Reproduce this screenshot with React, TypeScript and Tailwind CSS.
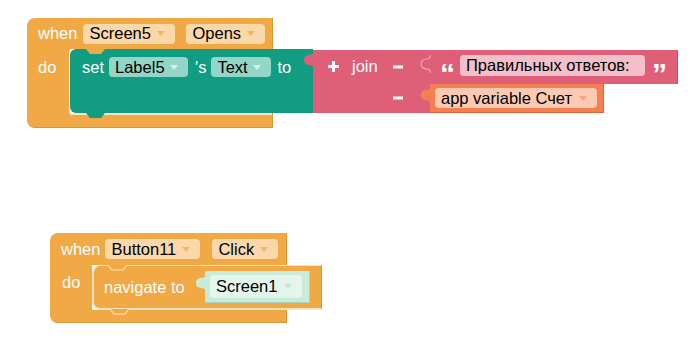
import React from "react";

type PillProps = {
  label: string;
  className: string;
  arrow: string;
};

const Arrow = ({ color }: { color: string }) => (
  <svg width="8" height="5" viewBox="0 0 8 5" className="shrink-0">
    <path d="M0 0H8L4 5Z" fill={color} />
  </svg>
);

const Pill = ({ label, className, arrow }: PillProps) => (
  <div
    className={`flex items-center justify-between rounded-[4px] pl-[6px] pr-[10px] text-black whitespace-nowrap ${className}`}
  >
    <span>{label}</span>
    <Arrow color={arrow} />
  </div>
);

// trapezoid notch used on statement blocks
const Notch = ({ fill, stroke, className }: { fill: string; stroke?: string; className: string }) => (
  <svg width="20" height="6" viewBox="0 0 20 6" className={`absolute ${className}`}>
    <path d="M0 0 L4 5 H15 L19 0" fill={fill} stroke={stroke ?? "none"} strokeWidth="1.2" />
  </svg>
);

// puzzle tab on the left of a value block
const Tab = ({ fill, stroke, className }: { fill: string; stroke?: string; className: string }) => (
  <svg width="11" height="18" viewBox="0 0 11 18" className={`absolute ${className}`}>
    <path
      d="M11 0.5 C10 0.5 10 3 9 3.5 C3 4 1 5.5 1 9 C1 12.5 3 14 9 14.5 C10 15 10 17.5 11 17.5"
      fill={fill}
      stroke={stroke ?? "none"}
      strokeWidth="1.2"
    />
  </svg>
);

const Minus = () => (
  <svg width="10" height="4" viewBox="0 0 10 4">
    <rect x="0" y="0.5" width="10" height="3" fill="#fff" />
  </svg>
);

const Plus = () => (
  <svg width="11" height="11" viewBox="0 0 11 11">
    <rect x="0" y="4" width="11" height="3" fill="#fff" />
    <rect x="4" y="0" width="3" height="11" fill="#fff" />
  </svg>
);

const OpensEvent = () => (
  <div className="absolute left-[27px] top-[18px] flex flex-col">
    <div className="flex items-center w-[246px] h-[31px] bg-[#f1a946] rounded-tl-[8px] border-r border-[#dc9536] pl-[11px] text-white">
      <span>when</span>
      <Pill label="Screen5" className="ml-[6px] w-[92px] h-[20px] bg-[#fad8aa]" arrow="#f3b566" />
      <Pill label="Opens" className="ml-[11px] w-[79px] h-[20px] bg-[#fad8aa]" arrow="#f3b566" />
    </div>

    <div className="flex">
      <div className="w-[43px] bg-[#f1a946] border-r border-[#fae3c3] pl-[11px] pt-[6px] text-white">do</div>

      <div className="flex items-start">
        <div className="relative w-[243px] h-[64px] bg-[#129c81] rounded-l-[6px] flex items-start pt-[8px] pl-[12px] text-white">
          <Notch fill="#f1a946" className="left-[16px] top-0" />
          <Notch fill="#129c81" className="left-[16px] top-full" />
          <span className="leading-[20px]">set</span>
          <Pill label="Label5" className="ml-[5px] w-[79px] h-[20px] bg-[#93d5c7]" arrow="#d3efe8" />
          <span className="ml-[7px] leading-[20px]">'s</span>
          <Pill label="Text" className="ml-[5px] w-[60px] h-[20px] bg-[#93d5c7]" arrow="#d3efe8" />
          <span className="ml-[6px] leading-[20px]">to</span>
        </div>

        <div className="relative w-[117px] h-[63px] mt-[1px] bg-[#df5f78] text-white">
          <Tab fill="#df5f78" className="-left-[10px] top-[1px]" />
          <div className="flex items-center h-[33px] pl-[15px]">
            <Plus />
            <span className="ml-[13px] w-[41px]">join</span>
            <Minus />
          </div>
          <div className="flex items-center h-[30px] pl-[80px]">
            <Minus />
          </div>
        </div>

        <div className="flex flex-col mt-[1px]">
          <div className="relative flex items-start w-[248px] h-[34px] bg-[#df5f78] border-r border-[#c9506a] pl-[10px] pt-[5px] text-white">
            <Tab fill="#df5f78" stroke="#f2aab8" className="-left-[10px] top-[5px]" />
            <span className="mt-[10px] w-[14px] h-[18px] font-bold text-[30px] leading-[18px]">“</span>
            <div className="ml-[6px] flex items-center w-[185px] h-[21px] rounded-[4px] bg-[#f3bfca] pl-[6px] text-black whitespace-nowrap">
              Правильных ответов:
            </div>
            <span className="ml-[7px] mt-[10px] w-[14px] h-[18px] font-bold text-[30px] leading-[18px]">”</span>
          </div>
          <div className="relative flex items-start w-[174px] h-[29px] bg-[#f5804f] border-r border-b border-[#d9693d] pl-[5px] pt-[4px]">
            <Tab fill="#f5804f" className="-left-[10px] top-[2px]" />
            <Pill label="app variable Счет" className="w-[162px] h-[20px] bg-[#fccab3]" arrow="#f7a584" />
          </div>
        </div>
      </div>
    </div>

    <div className="w-[246px] h-[15px] bg-[#f1a946] rounded-bl-[8px] border-b border-r border-[#dc9536] pl-[43px]">
      <div className="h-[2px] bg-[#fae3c3]" />
    </div>
  </div>
);

const ClickEvent = () => (
  <div className="absolute left-[50px] top-[233px] flex flex-col">
    <div className="flex items-center w-[237px] h-[32px] bg-[#f1a946] rounded-tl-[8px] border-r border-[#dc9536] pl-[11px] text-white">
      <span>when</span>
      <Pill label="Button11" className="ml-[5px] w-[95px] h-[20px] bg-[#fad8aa]" arrow="#f3b566" />
      <Pill label="Click" className="ml-[12px] w-[66px] h-[20px] bg-[#fad8aa]" arrow="#f3b566" />
    </div>

    <div className="flex">
      <div className="w-[42px] bg-[#f1a946] pl-[12px] pt-[5px] text-white">do</div>
      <div className="relative flex items-center w-[230px] h-[45px] bg-[#f1a946] rounded-l-[8px] border-l-2 border-t border-b-2 border-[#fae3c3] border-r border-r-[#dc9536] pl-[10px] text-white">
        <Notch fill="#f1a946" stroke="#fae3c3" className="left-[14px] -top-[1px]" />
        <Notch fill="#f1a946" stroke="#fae3c3" className="left-[16px] -bottom-[7px]" />
        <span>navigate to</span>
        <div className="relative ml-auto mr-[11px] flex items-start w-[105px] h-[32px] bg-[#c9ebd9] border-r border-b border-[#a9d3be] pl-[5px] pt-[4px]">
          <Tab fill="#c9ebd9" className="-left-[10px] top-[3px]" />
          <Pill label="Screen1" className="w-[92px] h-[23px] bg-[#e4f5ec]" arrow="#c4e4d4" />
        </div>
      </div>
    </div>

    <div className="w-[237px] h-[13px] bg-[#f1a946] rounded-bl-[8px] border-b border-r border-[#dc9536]" />
  </div>
);

export default function App() {
  return (
    <div className="relative w-[697px] h-[350px] bg-white overflow-hidden font-['Liberation_Sans',Arial,sans-serif] text-[16.5px]">
      <OpensEvent />
      <ClickEvent />
    </div>
  );
}
